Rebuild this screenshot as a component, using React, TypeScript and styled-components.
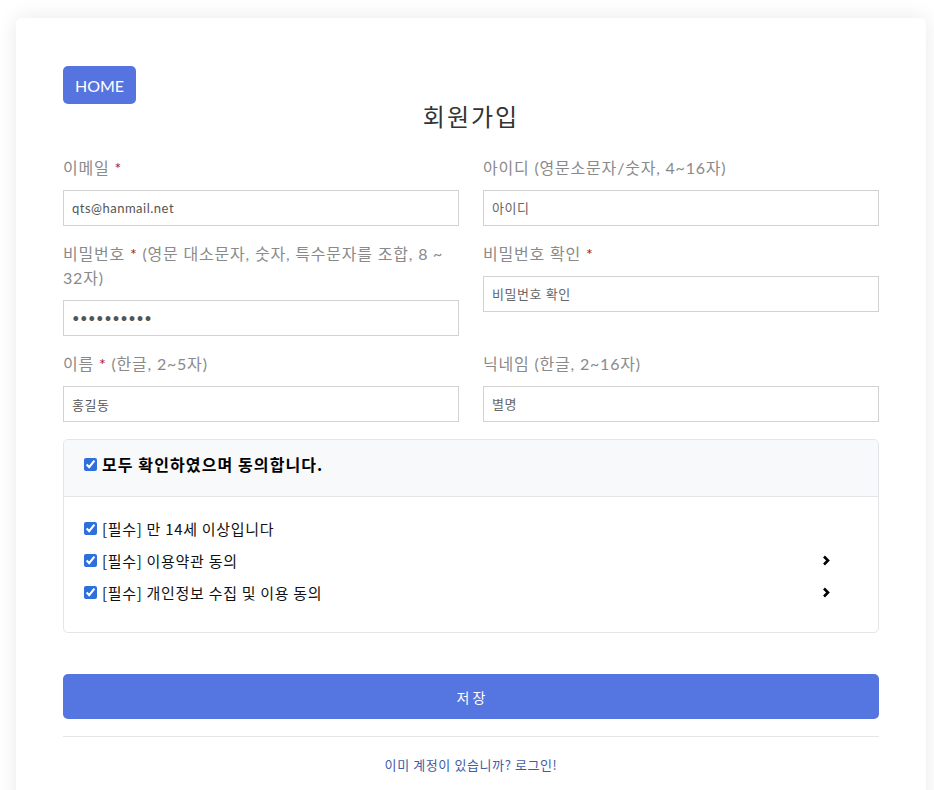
import React from "react";
import styled, { createGlobalStyle } from "styled-components";

const GlobalStyle = createGlobalStyle`
  body {
    margin: 0;
    background: #ffffff;
    font-family: Lato, "Noto Sans CJK KR", sans-serif;
  }
  * { box-sizing: border-box; }
`;

export default function App() {
  return (
    <>
      <GlobalStyle />
      <Page>
        <Card>
          <HomeButton>HOME</HomeButton>
          <Title>회원가입</Title>

          <FormGrid>
            <Field>
              <Label>
                이메일 <Req>*</Req>
              </Label>
              <Input defaultValue="qts@hanmail.net" />
            </Field>
            <Field>
              <Label>아이디 (영문소문자/숫자, 4~16자)</Label>
              <Input placeholder="아이디" />
            </Field>
            <Field>
              <Label>
                비밀번호 <Req>*</Req> (영문 대소문자, 숫자, 특수문자를 조합, 8 ~ 32자)
              </Label>
              <Input type="password" defaultValue="qwer123456" />
            </Field>
            <Field>
              <Label>
                비밀번호 확인 <Req>*</Req>
              </Label>
              <Input type="password" placeholder="비밀번호 확인" />
            </Field>
            <Field>
              <Label>
                이름 <Req>*</Req> (한글, 2~5자)
              </Label>
              <Input defaultValue="홍길동" />
            </Field>
            <Field>
              <Label>닉네임 (한글, 2~16자)</Label>
              <Input placeholder="별명" />
            </Field>
          </FormGrid>

          <AgreeBox>
            <AgreeHead>
              <Check defaultChecked />
              <span>모두 확인하였으며 동의합니다.</span>
            </AgreeHead>
            <AgreeBody>
              <AgreeRow>
                <CheckLabel>
                  <Check defaultChecked />
                  [필수] 만 14세 이상입니다
                </CheckLabel>
              </AgreeRow>
              <AgreeRow>
                <CheckLabel>
                  <Check defaultChecked />
                  [필수] 이용약관 동의
                </CheckLabel>
                <Chevron />
              </AgreeRow>
              <AgreeRow>
                <CheckLabel>
                  <Check defaultChecked />
                  [필수] 개인정보 수집 및 이용 동의
                </CheckLabel>
                <Chevron />
              </AgreeRow>
            </AgreeBody>
          </AgreeBox>

          <SaveButton>저 장</SaveButton>
          <Divider />
          <LoginLink href="#">이미 계정이 있습니까? 로그인!</LoginLink>
        </Card>
      </Page>
    </>
  );
}

function Chevron() {
  return (
    <ChevronSvg width="8" height="11" viewBox="0 0 8 11">
      <polyline points="2,1.5 6,5.5 2,9.5" fill="none" stroke="#000" strokeWidth="2.6" />
    </ChevronSvg>
  );
}

const Page = styled.div`
  padding: 18px 8px 0 16px;
`;

const Card = styled.div`
  background: #fff;
  border-radius: 6px;
  box-shadow: 0 0 22px rgba(0, 0, 0, 0.09);
  padding: 48px 47px 40px;
  display: flex;
  flex-direction: column;
`;

const HomeButton = styled.button`
  align-self: flex-start;
  height: 38px;
  width: 73px;
  border: none;
  border-radius: 5px;
  background: #5574e0;
  color: #fff;
  font-family: Lato, sans-serif;
  font-size: 16px;
  padding: 0;
  cursor: pointer;
`;

const Title = styled.h2`
  margin: 0;
  font-size: 24px;
  line-height: 24px;
  font-weight: 400;
  letter-spacing: 2px;
  color: #333;
  text-align: center;
  font-family: "Noto Sans CJK KR", sans-serif;
`;

const FormGrid = styled.div`
  margin-top: 28px;
  display: grid;
  grid-template-columns: 1fr 1fr;
  column-gap: 24px;
  row-gap: 16px;
  align-items: start;
`;

const Field = styled.div`
  display: flex;
  flex-direction: column;
  gap: 10px;
`;

const Label = styled.label`
  font-size: 16px;
  line-height: 24px;
  letter-spacing: 0.8px;
  color: #8a8a8a;
`;

const Req = styled.span`
  color: #b0102a;
`;

const Input = styled.input`
  height: 36px;
  width: 100%;
  border: 1px solid #d2d2d2;
  padding: 0 8px;
  font-family: Lato, "Noto Sans CJK KR", sans-serif;
  font-size: 13px;
  letter-spacing: 0.5px;
  color: #555;
  outline: none;
  &::placeholder {
    color: #666;
  }
`;

const AgreeBox = styled.div`
  margin-top: 17px;
  border: 1px solid #e3e5e8;
  border-radius: 5px;
`;

const AgreeHead = styled.div`
  display: flex;
  align-items: center;
  gap: 5px;
  padding: 12px 20px 20px;
  background: #f8f9fb;
  border-bottom: 1px solid #e3e5e8;
  border-radius: 5px 5px 0 0;
  font-size: 16px;
  line-height: 24px;
  font-weight: 700;
  letter-spacing: 1.1px;
  color: #000;
  font-family: "Noto Sans CJK KR", sans-serif;
`;

const Check = styled.input.attrs({ type: "checkbox" })`
  width: 13px;
  height: 13px;
  margin: 0;
  accent-color: #2f6fdc;
`;

const AgreeBody = styled.div`
  padding: 15px 48px 24px 20px;
`;

const AgreeRow = styled.div`
  display: flex;
  align-items: center;
  justify-content: space-between;
  height: 32px;
`;

const CheckLabel = styled.label`
  display: flex;
  align-items: center;
  gap: 5px;
  font-size: 15px;
  letter-spacing: 0.7px;
  color: #111;
  font-family: "Noto Sans CJK KR", sans-serif;
`;

const ChevronSvg = styled.svg`
  display: block;
`;

const SaveButton = styled.button`
  margin-top: 41px;
  height: 45px;
  border: none;
  border-radius: 5px;
  background: #5575e0;
  color: #fff;
  font-size: 14px;
  font-family: "Noto Sans CJK KR", sans-serif;
  cursor: pointer;
`;

const Divider = styled.hr`
  margin: 17px 0 0;
  border: none;
  border-top: 1px solid #e5e5e5;
`;

const LoginLink = styled.a`
  margin-top: 18px;
  align-self: center;
  font-size: 13px;
  line-height: 20px;
  letter-spacing: 0.6px;
  color: #3d5ca8;
  text-decoration: none;
  font-family: "Noto Sans CJK KR", sans-serif;
`;
